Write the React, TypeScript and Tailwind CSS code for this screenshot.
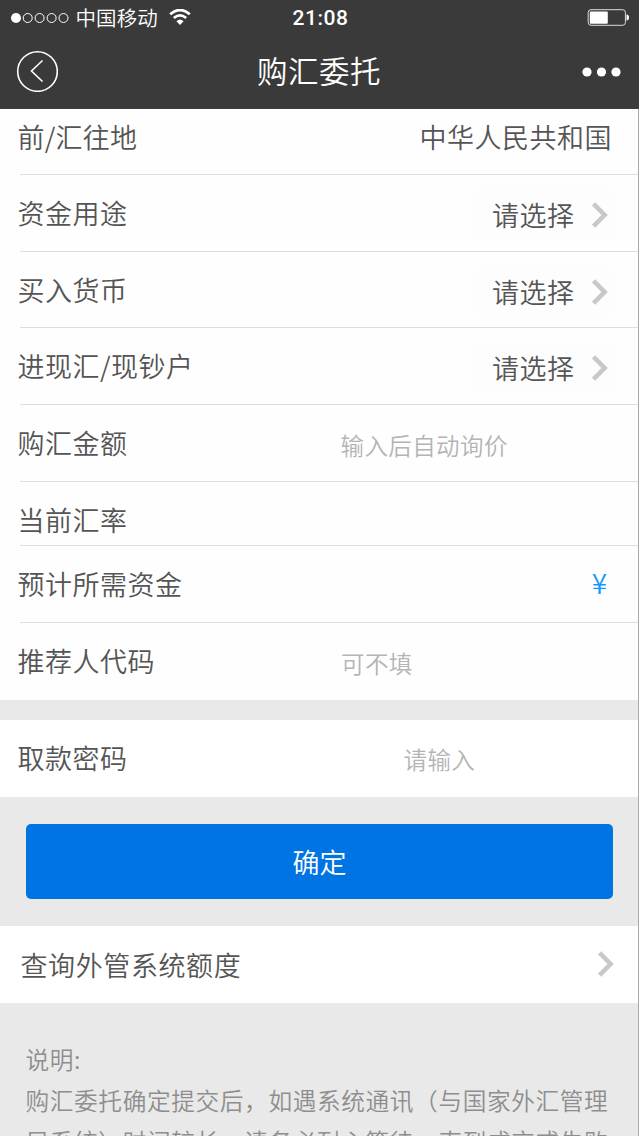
import type { ReactNode } from "react";

function Chevron() {
  return (
    <svg className="h-[26px] w-4 shrink-0" viewBox="0 0 16 26" fill="none">
      <path d="M1.6 1.8 12.6 13 1.6 24.2" stroke="#c8c8c8" strokeWidth="4.6" />
    </svg>
  );
}

function Row({ label, height, children }: { label: string; height: string; children?: ReactNode }) {
  return (
    <div className={`flex shrink-0 pl-[17.5px] ${height}`}>
      <span className="shrink-0">{label}</span>
      {children}
    </div>
  );
}

function Divider() {
  return <div className="ml-5 h-px shrink-0 bg-[#dedee2]" />;
}

function Picker() {
  return (
    <div className="mt-[13px] mr-[25px] ml-auto flex h-[54px] w-[138px] items-center rounded-md bg-[#fdfdfd] pl-[17px]">
      <span className="w-[100px] leading-[54px]">请选择</span>
      <Chevron />
    </div>
  );
}

function Hint({ text, offset }: { text: string; offset: string }) {
  return (
    <div className={`shrink-0 text-[23.5px] tracking-[0.4px] text-[#b4b4b4] ${offset}`}>{text}</div>
  );
}

function StatusBar() {
  return (
    <div className="flex h-[35px] items-center pr-[9px] pl-[11px]">
      <div className="flex flex-1 items-center">
        <svg className="h-[12px] w-[58px]" viewBox="0 0 58 12" fill="none" stroke="#fff">
          <circle cx="5" cy="6" r="5" fill="#fff" stroke="none" />
          <circle cx="16.7" cy="6" r="4.5" />
          <circle cx="28.6" cy="6" r="4.5" />
          <circle cx="40.6" cy="6" r="4.5" />
          <circle cx="52.5" cy="6" r="4.5" />
        </svg>
        <span className="-mt-px ml-[6.5px] text-[20.5px] leading-[34px] tracking-[0.1px]">中国移动</span>
        <svg className="-mt-px ml-[11px] h-4 w-[22px]" viewBox="0 0 22 16" fill="none" stroke="#fff">
          <path d="M1.2 5.3Q11-3.1 20.8 5.3" strokeWidth="2.8" />
          <path d="M4.8 9Q11 3.8 17.2 9" strokeWidth="2.6" />
          <path d="M11 16 7.4 12.3Q11 8.9 14.6 12.3Z" fill="#fff" stroke="none" />
        </svg>
      </div>
      <span className="mt-[2px] font-['Roboto','Noto_Sans_CJK_SC',sans-serif] text-[21px] font-medium tracking-[0.5px]">21:08</span>
      <div className="flex flex-1 justify-end">
        <svg className="h-[18px] w-[43px]" viewBox="0 0 43 18">
          <rect x="1.2" y=".7" width="37.2" height="15.6" rx="2.8" fill="none" stroke="#ddd" />
          <rect x="2.8" y="2.4" width="18" height="12.4" rx="1" fill="#fff" />
          <path d="M39.5 5.5Q42 5.5 42 8.5T39.5 11.5Z" fill="#fff" />
        </svg>
      </div>
    </div>
  );
}

function NavBar() {
  return (
    <div className="-mt-px flex h-[74px] items-center justify-between pr-[17px] pl-4">
      <svg className="h-[42px] w-[42px]" viewBox="0 0 42 42" fill="none" stroke="#fff">
        <circle cx="21.5" cy="21.5" r="19.8" strokeWidth="1.6" />
        <path d="M26.5 10.5 15.5 21 26.5 31.5" strokeWidth="1.6" />
      </svg>
      <h1 className="-mt-[3px] mr-[2px] text-[30.5px] leading-[74px] tracking-[0.5px]">购汇委托</h1>
      <svg className="mt-px h-3 w-[40px]" viewBox="0 0 40 12" fill="#fff">
        <circle cx="5" cy="6" r="4.6" />
        <circle cx="19.5" cy="6" r="4.6" />
        <circle cx="34" cy="6" r="4.6" />
      </svg>
    </div>
  );
}

export default function App() {
  return (
    <div className="flex h-[1136px] w-[639px] flex-col overflow-hidden bg-[#e9e9e9] font-['Noto_Sans_CJK_SC',sans-serif] text-[27px] leading-[75px] font-[350] tracking-[0.5px] whitespace-nowrap text-[#555]">
      <header className="h-[109px] shrink-0 bg-[#3a3a3a] text-white">
        <StatusBar />
        <NavBar />
      </header>

      <div className="flex flex-1 flex-col overflow-hidden border-r border-[#a9a9a9]">
        <section className="flex shrink-0 flex-col bg-[#fefefe]">
          <div className="flex h-[65px] shrink-0 justify-between pr-[26px] pl-[17.5px] leading-[56px]">
            <span className="tracking-[0.2px]">前/汇往地</span>
            <span>中华人民共和国</span>
          </div>
          <Divider />
          <Row label="资金用途" height="h-[76px]"><Picker /></Row>
          <Divider />
          <Row label="买入货币" height="h-[75px]"><Picker /></Row>
          <Divider />
          <Row label="进现汇/现钞户" height="h-[76px]"><Picker /></Row>
          <Divider />
          <Row label="购汇金额" height="h-[76px]"><Hint text="输入后自动询价" offset="pt-[3px] ml-[213px]" /></Row>
          <Divider />
          <Row label="当前汇率" height="h-[63px]" />
          <Divider />
          <Row label="预计所需资金" height="h-[76px]">
            <span className="-mt-px mr-[31px] ml-auto text-[28px] tracking-normal text-[#119bff]">¥</span>
          </Row>
          <Divider />
          <Row label="推荐人代码" height="h-[77px]"><Hint text="可不填" offset="pt-[3px] ml-[186px]" /></Row>
        </section>

        <section className="mt-5 shrink-0 bg-white">
          <Row label="取款密码" height="h-[77px]"><Hint text="请输入" offset="pt-[2px] ml-[276px]" /></Row>
        </section>

        <button className="mt-[27px] mr-[25px] ml-[26px] h-[75px] shrink-0 rounded-[5px] bg-[#0074e3] pb-[2px] tracking-normal text-white">确定</button>

        <section className="mt-[27px] flex h-[77px] shrink-0 items-center justify-between bg-white pr-6 pb-px pl-[20.5px]">
          <span className="tracking-[0.6px]">查询外管系统额度</span>
          <Chevron />
        </section>

        <div className="pt-[36px] pl-[25.5px] text-[23.7px] leading-[41px] tracking-[0.6px] text-[#8e8e8e]">
          <p>说明:</p>
          <p>购汇委托确定提交后，如遇系统通讯（与国家外汇管理</p>
          <p>局系统）时间较长，请务必耐心等待，直到成交或失败</p>
        </div>
      </div>
    </div>
  );
}
